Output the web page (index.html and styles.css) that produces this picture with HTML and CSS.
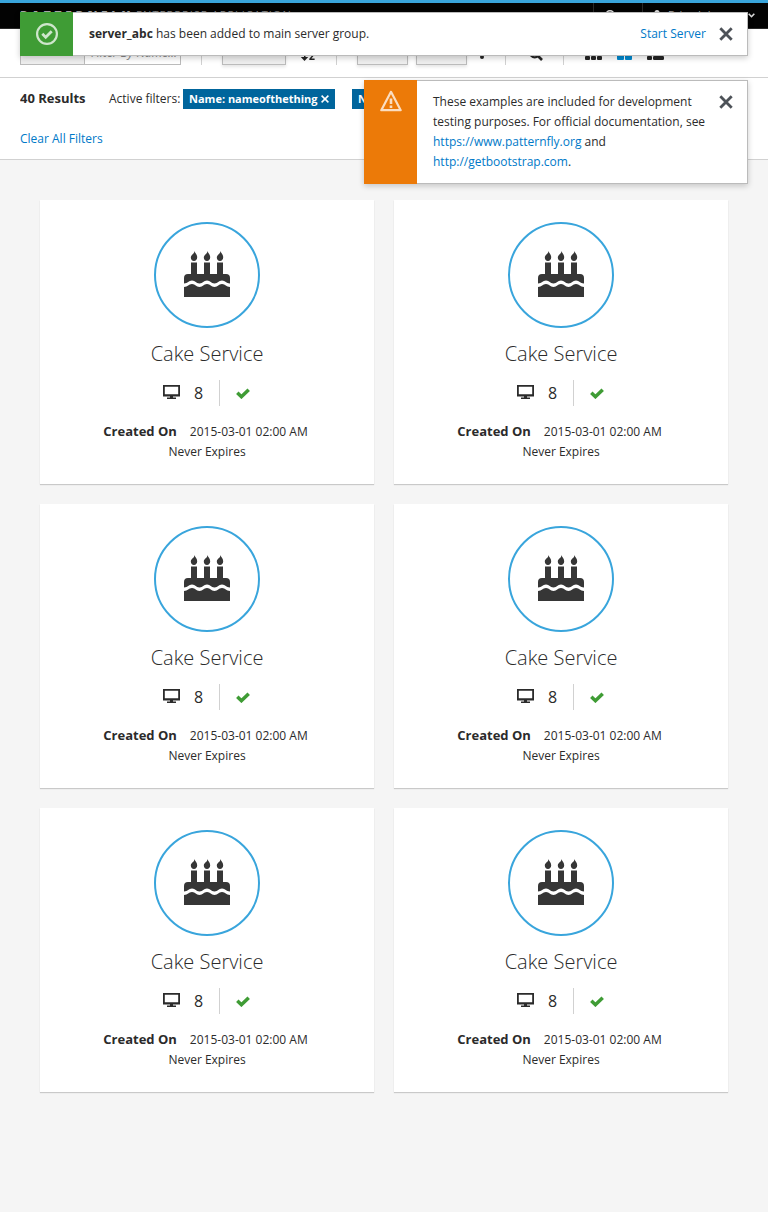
FILE: index.html
```html
<!DOCTYPE html>
<html lang="en">
<head>
<meta charset="utf-8">
<title>PatternFly Card View</title>
<link rel="stylesheet" href="styles.css">
</head>
<body>
<svg class="defs" aria-hidden="true">
  <symbol id="cake" viewBox="0 0 46 46">
    <path d="M7 24V11.500h6V24zM20 24V11.500h6V24zM33 24V11.500h6V24z"/>
    <path d="M10.500 0c.3 2 2.700 3.400 2.700 6.300 0 2-1.200 3.700-3.200 3.700S6.800 8.300 6.800 6.500C6.800 3.800 10.500 3 10.500 0zM23.500 0c.3 2 2.700 3.400 2.700 6.300 0 2-1.200 3.700-3.200 3.700s-3.200-1.700-3.200-3.500C19.800 3.800 23.500 3 23.500 0zM36.500 0c.3 2 2.700 3.400 2.700 6.300 0 2-1.200 3.700-3.200 3.700s-3.200-1.700-3.200-3.500C32.800 3.800 36.500 3 36.500 0z"/>
    <path d="M0 32.500V27q0-4 4-4h38q4 0 4 4v5.500c-4 0-4.500-3-8-3s-4 3-7.500 3-4-3-7.500-3-4 3-7.500 3-4-3-7.500-3-4 3-8 3z"/>
    <path d="M0 46V36c4 0 4.500-3 8-3s4 3 7.500 3 4-3 7.500-3 4 3 7.500 3 4-3 7.500-3 4 3 8 3v10z"/>
  </symbol>
  <symbol id="screen" viewBox="0 0 17 14">
    <path fill-rule="evenodd" d="M0 0h17v11.500h-7v1h3V14H4v-1.500h3v-1H0zM1.800 1.800v7.400h13.400V1.800z"/>
  </symbol>
  <symbol id="check" viewBox="0 0 14 11">
    <path d="M1.300 4.800l4.100 3.900 7.300-7" fill="none" stroke="currentColor" stroke-width="3.500"/>
  </symbol>
  <symbol id="close" viewBox="0 0 14 14">
    <path d="M1.300 1.300l11.400 11.400M12.700 1.300L1.300 12.700" fill="none" stroke="currentColor" stroke-width="2.800"/>
  </symbol>
  <symbol id="x-small" viewBox="0 0 8 8">
    <path d="M.6.600l6.800 6.800M7.400.600L.6 7.400" fill="none" stroke="currentColor" stroke-width="1.500"/>
  </symbol>
</svg>

<header class="navbar">
  <div class="brand"><b>PATTERNFLY</b><span>ENTERPRISE APPLICATION</span></div>
  <div class="utility">
    <span class="util help"><svg width="10" height="10" viewBox="0 0 10 10"><circle cx="5" cy="5" r="4.300"/></svg></span>
    <span class="util user"><svg width="10" height="10" viewBox="0 0 10 10"><circle cx="5" cy="2.500" r="2.500"/><path d="M0 10q0-4 5-4t5 4z"/></svg><span class="user-name">Brian Johnson</span><svg class="caret" width="7" height="5" viewBox="0 0 7 5"><path d="M.7.700l2.800 3 2.800-3"/></svg></span>
  </div>
</header>

<div class="toolbar">
  <div class="filter"><span class="filter-type">Name</span><span class="filter-input">Filter By Name...</span></div>
  <div class="group sort">
    <span class="btn wide">Name</span>
    <svg width="16" height="14" viewBox="0 0 16 14"><path d="M4 0v9H.8L4.500 13 8.200 9H5.500V0zM9.500 5.500h5v1.200L11.400 10.500h3.200V12H9.300v-1.200l3.200-3.800h-3z"/></svg>
  </div>
  <div class="group actions">
    <span class="btn">Action</span><span class="btn">Action</span>
    <svg width="4" height="14" viewBox="0 0 4 14"><circle cx="2" cy="2" r="2"/><circle cx="2" cy="7" r="2"/><circle cx="2" cy="12" r="2"/></svg>
  </div>
  <div class="group find"><svg width="14" height="14" viewBox="0 0 14 14"><path d="M8.500 8.500l4.500 4.500" stroke="currentColor" stroke-width="2.600"/><circle cx="5.700" cy="5.700" r="4.600" fill="none" stroke="currentColor" stroke-width="2.200"/></svg></div>
  <div class="group views">
    <svg width="17" height="16" viewBox="0 0 17 16"><path d="M0 0h5v4H0zM6 0h5v4H6zM12 0h5v4h-5zM0 6h5v4H0zM6 6h5v4H6zM12 6h5v4h-5z"/><rect y="12" width="5" height="4" rx="1"/><rect x="6" y="12" width="5" height="4" rx="1"/><rect x="12" y="12" width="5" height="4" rx="1"/></svg>
    <svg class="active" width="15" height="16" viewBox="0 0 15 16"><rect width="7" height="7" rx="1"/><rect x="8" width="7" height="7" rx="1"/><rect y="9" width="7" height="7" rx="1"/><rect x="8" y="9" width="7" height="7" rx="1"/></svg>
    <svg width="17" height="16" viewBox="0 0 17 16"><path d="M0 0h5v4H0zM6 0h11v4H6zM0 6h5v4H0zM6 6h11v4H6z"/><rect y="12" width="5" height="4" rx="1"/><rect x="6" y="12" width="11" height="4" rx="1.300"/></svg>
  </div>
</div>

<div class="results">
  <div class="results-row">
    <h5>40 Results</h5>
    <span class="filters-label">Active filters:</span>
    <span class="tag">Name: nameofthething<svg width="8" height="8"><use href="#x-small"/></svg></span>
    <span class="tag">Name:</span>
  </div>
  <a class="clear" href="#">Clear All Filters</a>
</div>

<main class="cards">
  <article class="card">
    <div class="badge"><svg width="46" height="46"><use href="#cake"/></svg></div>
    <h2>Cake Service</h2>
    <div class="stats"><span class="count"><svg width="17" height="14"><use href="#screen"/></svg>8</span><span class="ok"><svg width="14" height="11"><use href="#check"/></svg></span></div>
    <p><strong>Created On</strong>2015-03-01 02:00 AM</p><p>Never Expires</p>
  </article>
  <article class="card">
    <div class="badge"><svg width="46" height="46"><use href="#cake"/></svg></div>
    <h2>Cake Service</h2>
    <div class="stats"><span class="count"><svg width="17" height="14"><use href="#screen"/></svg>8</span><span class="ok"><svg width="14" height="11"><use href="#check"/></svg></span></div>
    <p><strong>Created On</strong>2015-03-01 02:00 AM</p><p>Never Expires</p>
  </article>
  <article class="card">
    <div class="badge"><svg width="46" height="46"><use href="#cake"/></svg></div>
    <h2>Cake Service</h2>
    <div class="stats"><span class="count"><svg width="17" height="14"><use href="#screen"/></svg>8</span><span class="ok"><svg width="14" height="11"><use href="#check"/></svg></span></div>
    <p><strong>Created On</strong>2015-03-01 02:00 AM</p><p>Never Expires</p>
  </article>
  <article class="card">
    <div class="badge"><svg width="46" height="46"><use href="#cake"/></svg></div>
    <h2>Cake Service</h2>
    <div class="stats"><span class="count"><svg width="17" height="14"><use href="#screen"/></svg>8</span><span class="ok"><svg width="14" height="11"><use href="#check"/></svg></span></div>
    <p><strong>Created On</strong>2015-03-01 02:00 AM</p><p>Never Expires</p>
  </article>
  <article class="card">
    <div class="badge"><svg width="46" height="46"><use href="#cake"/></svg></div>
    <h2>Cake Service</h2>
    <div class="stats"><span class="count"><svg width="17" height="14"><use href="#screen"/></svg>8</span><span class="ok"><svg width="14" height="11"><use href="#check"/></svg></span></div>
    <p><strong>Created On</strong>2015-03-01 02:00 AM</p><p>Never Expires</p>
  </article>
  <article class="card">
    <div class="badge"><svg width="46" height="46"><use href="#cake"/></svg></div>
    <h2>Cake Service</h2>
    <div class="stats"><span class="count"><svg width="17" height="14"><use href="#screen"/></svg>8</span><span class="ok"><svg width="14" height="11"><use href="#check"/></svg></span></div>
    <p><strong>Created On</strong>2015-03-01 02:00 AM</p><p>Never Expires</p>
  </article>
</main>

<div class="toasts">
  <div class="toast success">
    <span class="toast-icon"><svg width="22" height="22" viewBox="0 0 22 22"><circle cx="11" cy="11" r="9.900" stroke-width="2.200"/><path d="M6.300 10.800l3.400 3.400 6-6" stroke-width="2.800"/></svg></span>
    <p><b>server_abc</b> has been added to main server group.</p>
    <a href="#">Start Server</a>
    <svg class="close" width="14" height="14"><use href="#close"/></svg>
  </div>
  <div class="toast warning">
    <span class="toast-icon"><svg width="22" height="22" viewBox="0 0 22 22"><path d="M11 1.800L1.300 20.200h19.400z" stroke-width="2.200" stroke-linejoin="round"/><path d="M11 8.500v5.500M11 15.500v2.500" stroke-width="2.600"/></svg></span>
    <p>These examples are included for development testing purposes. For official documentation, see <a href="#">https://www.patternfly.org</a> and <a href="#">http://getbootstrap.com</a>.</p>
    <svg class="close" width="14" height="14"><use href="#close"/></svg>
  </div>
</div>
</body>
</html>
```

FILE: styles.css
```css
* { box-sizing: border-box; }
body {
  margin: 0;
  min-height: 1212px;
  background: #f5f5f5;
  color: #2b2b2b;
  font: 12px/20px "Open Sans", sans-serif;
}
a { color: #0079c8; text-decoration: none; }
p, h2, h5 { margin: 0; }
svg { fill: currentColor; flex: none; }
.defs { display: none; }

.navbar {
  display: flex;
  justify-content: space-between;
  height: 29px;
  overflow: hidden;
  background: #030303;
  border-top: 3px solid #39a5dc;
  border-bottom: 1px solid #292929;
  color: #ddd;
}
.brand {
  display: flex;
  gap: 5px;
  padding: 2px 0 0 20px;
  font-size: 11px;
  line-height: 20px;
  white-space: nowrap;
}
.brand b { width: 111px; padding-top: 1px; font-size: 12px; font-weight: 800; letter-spacing: 3.700px; color: #aaa; }
.brand span { letter-spacing: 1px; color: #888; }
.utility { display: flex; }
.util { display: flex; border-left: 1px solid #292929; }
.help { width: 49px; padding: 7px 0 0 11px; }
.help svg { fill: none; stroke: #ddd; stroke-width: 1.400; }
.user { width: 126px; padding: 7px 0 0 9px; font-size: 11px; }
.user-name { width: 83px; margin-top: -3px; padding-left: 6px; line-height: 16px; white-space: nowrap; color: #aaa; }
.caret { margin: 3px 0 0 3px; fill: none; stroke: #ddd; stroke-width: 1.600; }

.toolbar {
  display: flex;
  height: 49px;
  padding: 10px 20px 0;
  background: #fff;
  border-bottom: 1px solid #d1d1d1;
  color: #252525;
}
.filter {
  display: flex;
  width: 161px;
  height: 26px;
  margin-right: 20px;
  border: 1px solid #bbb;
  line-height: 24px;
}
.filter-type { width: 64px; padding-left: 8px; background: #eee; border-right: 1px solid #bbb; }
.filter-input { padding-left: 6px; line-height: 26px; font-style: italic; color: #888; white-space: nowrap; }
.group { display: flex; align-items: center; height: 26px; padding-left: 20px; border-left: 1px solid #d1d1d1; }
.btn {
  width: 51px;
  height: 26px;
  padding-left: 7px;
  border: 1px solid #bbb;
  background: #eee;
  box-shadow: 0 2px 3px rgba(3, 3, 3, .1);
  line-height: 22px;
}
.btn.wide { width: 64px; }
.sort { width: 135px; gap: 14px; }
.sort svg { margin-top: 6px; }
.actions { width: 169px; gap: 8px; }
.actions svg { margin-left: 5px; }
.find { width: 58px; padding-left: 23px; }
.find svg { margin-top: 4px; }
.views { gap: 15px; padding-left: 21px; }
.active { color: #0088ce; }

.results { height: 82px; padding: 11px 20px 0; background: #fff; border-bottom: 1px solid #d1d1d1; }
.results-row { display: flex; height: 20px; white-space: nowrap; overflow: hidden; }
.results h5 { width: 89px; font-size: 13px; font-weight: 700; line-height: 19px; }
.filters-label { width: 74px; }
.tag {
  display: flex;
  justify-content: space-between;
  align-items: center;
  width: 152px;
  margin-right: 17px;
  padding: 0 6px;
  background: #00659c;
  color: #fff;
  font-size: 11px;
  font-weight: 700;
}
.clear { display: inline-block; margin-top: 20px; }

.cards { display: grid; grid-template-columns: 334px 334px; gap: 20px; padding: 40px 40px 0; }
.card {
  display: flex;
  flex-direction: column;
  align-items: center;
  height: 284px;
  padding-top: 22px;
  background: #fff;
  box-shadow: 0 1px 1px rgba(3, 3, 3, .18);
  text-align: center;
}
.badge {
  display: flex;
  justify-content: center;
  align-items: center;
  width: 106px;
  height: 106px;
  padding-bottom: 2px;
  border: 2px solid #39a5dc;
  border-radius: 50%;
  color: #363636;
}
.card h2 { margin-top: 13px; font-size: 20px; font-weight: 300; line-height: 26px; }
.stats { display: flex; height: 26px; margin: 13px 0 15px; font-size: 16px; line-height: 26px; }
.count { display: flex; align-items: center; gap: 14px; padding-right: 16px; border-right: 1px solid #d1d1d1; }
.ok { display: flex; align-items: center; padding: 0 1px 0 16px; color: #3f9c35; }
.count svg { margin-bottom: 2px; }
.card strong { margin-right: 13px; font-size: 13px; }
.card .stats + p { padding-right: 3px; }

.toasts {
  position: absolute;
  top: 12px;
  right: 20px;
  display: flex;
  flex-direction: column;
  align-items: flex-end;
  gap: 24px;
}
.toast {
  display: flex;
  background: #fff;
  border: 1px solid #bbb;
  border-left: 0;
  box-shadow: 0 2px 6px rgba(3, 3, 3, .2);
}
.toast-icon { width: 53px; margin: -1px 0; padding: 11px 0 0 16px; color: rgba(255, 255, 255, .75); }
.toast-icon svg { display: block; fill: none; stroke: currentColor; }
.success { width: 728px; height: 44px; }
.success .toast-icon { background: #3f9c35; }
.success p { flex: 1; padding: 11px 0 0 16px; }
.success > a { padding-top: 11px; }
.close { margin: 14px 14px 0 13px; color: #4d5258; }
.warning { width: 384px; height: 104px; }
.warning .toast-icon { background: #ec7a08; padding-top: 10px; }
.warning p { flex: 1; padding: 11px 0 0 16px; }
```
